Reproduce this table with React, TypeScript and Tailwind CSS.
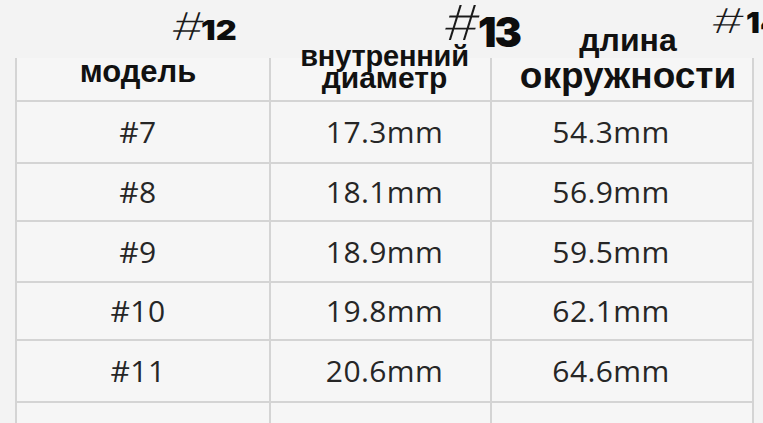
import React from "react";

const rows = [
  { model: "#7", inner: "17.3mm", length: "54.3mm", h: "h-[62px]" },
  { model: "#8", inner: "18.1mm", length: "56.9mm", h: "h-[58px]" },
  { model: "#9", inner: "18.9mm", length: "59.5mm", h: "h-[61px]" },
  { model: "#10", inner: "19.8mm", length: "62.1mm", h: "h-[58px]" },
  { model: "#11", inner: "20.6mm", length: "64.6mm", h: "h-[62px]" },
];

const head = "font-['Liberation_Sans',Arial,sans-serif] font-bold text-[#111] whitespace-nowrap";
const body = "font-['Open_Sans',sans-serif] text-[30px] leading-none text-[#262626] tracking-[0.4px]";
const cell = "border-r-2 border-b-2 border-[#d4d4d4] flex items-center justify-center";
const hash = "inline-block origin-bottom-left -skew-x-6 font-['Inter',sans-serif] font-extralight text-[#1a1a1a] leading-none";
const num = "inline-block origin-left font-['Inter',sans-serif] font-black text-[#0d0d0d] leading-none";

export default function App() {
  return (
    <div className="relative w-[763px] h-[423px] overflow-hidden bg-[#f3f3f3]">
      <div className="ml-[15px] mt-[58px] w-[739px] border-l-2 border-[#d4d4d4] bg-[#f6f6f6] grid grid-cols-[254px_221px_262px]">
        {/* header */}
        <div className="h-[44px] border-r-2 border-b-2 border-[#d4d4d4] flex flex-col items-center justify-end pb-[13px] pr-[10px]">
          <span className={`${head} text-[31px] leading-[31px]`}>модель</span>
        </div>
        <div className="h-[44px] border-r-2 border-b-2 border-[#d4d4d4] flex flex-col items-center justify-end pb-[11px] pl-[8px]">
          <span className={`${head} text-[29px] leading-[22px] tracking-[-0.2px]`}>внутренний</span>
          <span className={`${head} text-[30px] leading-[22px]`}>диаметр</span>
        </div>
        <div className="h-[44px] border-r-2 border-b-2 border-[#d4d4d4] flex flex-col items-center justify-end pb-[7px] pl-[12px]">
          <span className={`${head} text-[32px] leading-[35px]`}>длина</span>
          <span className={`${head} text-[37px] leading-[35px]`}>окружности</span>
        </div>

        {rows.map((r) => (
          <React.Fragment key={r.model}>
            <div className={`${cell} ${r.h} pr-[10px]`}>
              <span className={body}>{r.model}</span>
            </div>
            <div className={`${cell} ${r.h} pl-[8px]`}>
              <span className={body}>{r.inner}</span>
            </div>
            <div className={`${cell} ${r.h} pr-[22px]`}>
              <span className={body}>{r.length}</span>
            </div>
          </React.Fragment>
        ))}

        <div className={`${cell} h-[40px]`} />
        <div className={`${cell} h-[40px]`} />
        <div className={`${cell} h-[40px]`} />
      </div>

      {/* size stamps over the header */}
      <div className="absolute left-[170px] top-[7px] flex items-baseline">
        <span className="w-[31px]">
          <span className={`${hash} text-[38px] scale-x-[1.3]`}>#</span>
        </span>
        <span className={`${num} text-[27px] scale-x-[1.2]`}>12</span>
      </div>
      <div className="absolute left-[442px] top-[6px] flex items-baseline">
        <span className="w-[36px] relative -top-[7px]">
          <span className={`${hash} text-[48px] scale-x-[1.15]`}>#</span>
        </span>
        <span className={`${num} text-[41px] tracking-[-2px]`}>13</span>
      </div>
      <div className="absolute left-[710px] top-[4px] flex items-baseline">
        <span className="w-[36px]">
          <span className={`${hash} text-[34px] scale-x-[1.45]`}>#</span>
        </span>
        <span className={`${num} text-[28px] scale-x-[1.1]`}>14</span>
      </div>
    </div>
  );
}
